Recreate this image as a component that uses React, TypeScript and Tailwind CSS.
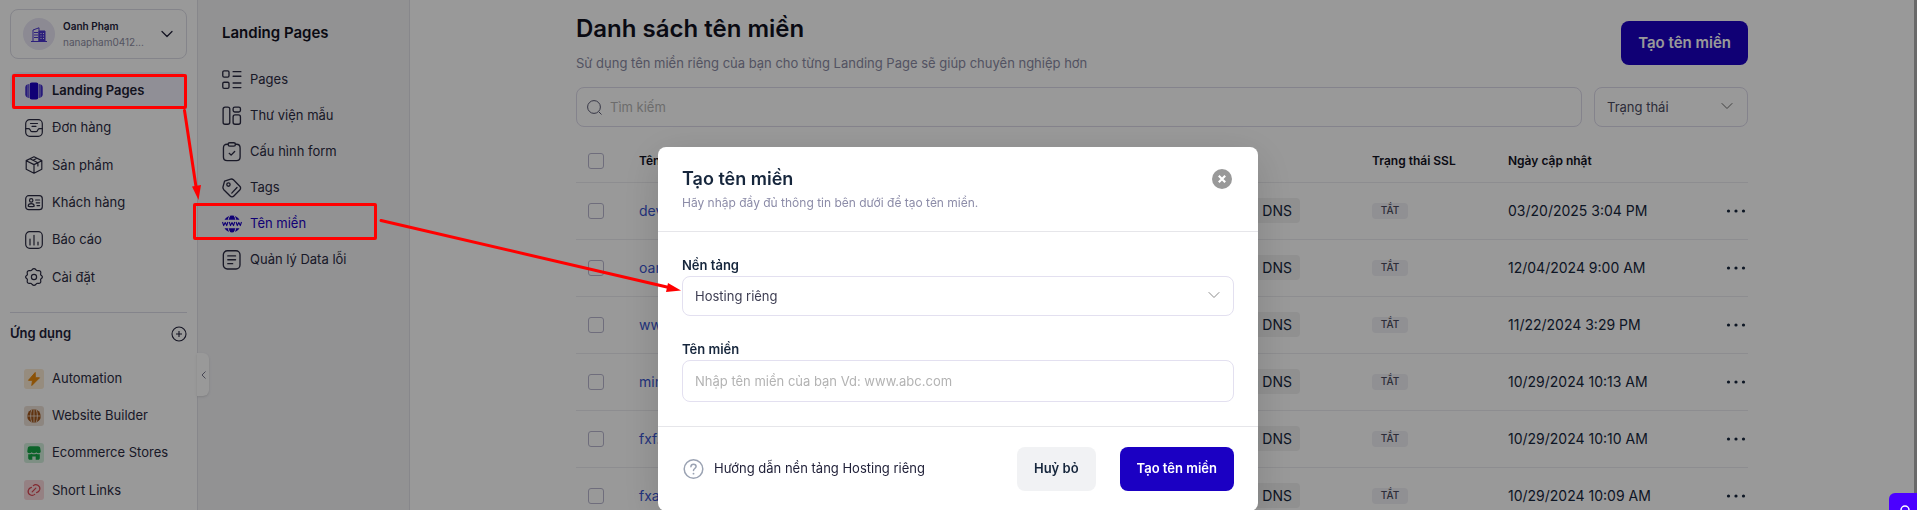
import type { ReactNode } from 'react'

type IconProps = { children: ReactNode; size?: string }

function Line({ children, size = 'size-[18px]' }: IconProps) {
  return (
    <svg viewBox="0 0 18 18" className={`${size} shrink-0`} fill="none" stroke="currentColor" strokeWidth="1.2" strokeLinecap="round" strokeLinejoin="round" aria-hidden="true">
      {children}
    </svg>
  )
}

function Chevron({ className }: { className: string }) {
  return (
    <svg viewBox="0 0 12 8" className={className} fill="none" stroke="currentColor" strokeLinecap="round" strokeLinejoin="round" aria-hidden="true">
      <path d="M1 1.5 6 6.5 11 1.5" />
    </svg>
  )
}

const mainNav = [
  {
    label: 'Landing Pages',
    active: true,
    icon: (
      <svg viewBox="0 0 18 18" className="size-[18px] shrink-0 text-[#1b00c3]" fill="currentColor" aria-hidden="true">
        <rect x="4.600" y="0.500" width="8.800" height="17" rx="2.200" />
        <path d="M3.600 2v14C1.600 15.600.4 14.600.4 12.600V5.400C.4 3.400 1.600 2.400 3.600 2Z" />
        <path d="M14.400 2v14c2-.4 3.200-1.400 3.200-3.400V5.400c0-2-1.200-3-3.200-3.400Z" />
        <path d="M2.200 2v14M15.800 2v14" stroke="#f3f1fc" strokeWidth=".6" />
      </svg>
    ),
  },
  {
    label: 'Đơn hàng',
    icon: (
      <Line>
        <rect x="0.700" y="0.700" width="16.600" height="16.600" rx="4" />
        <path d="M.7 9.700h2.600c.8 0 1.400.4 1.800 1.100l.5.900c.3.600.9.900 1.500.900h3.800c.6 0 1.200-.3 1.500-.9l.5-.9c.4-.7 1-1.100 1.800-1.100h2.600M5.500 4.500h7M7 7.300h4" />
      </Line>
    ),
  },
  {
    label: 'Sản phẩm',
    icon: (
      <Line>
        <path d="M9 .8 16.800 4.600v8.600L9 17.200 1.200 13.200V4.600L9 .8ZM1.200 4.700 9 8.600l7.800-3.900M9 8.600v8.500M5 2.800l7.900 3.900v3.200M8 4.300l3-1.600" />
      </Line>
    ),
  },
  {
    label: 'Khách hàng',
    icon: (
      <Line>
        <rect x="0.700" y="1.700" width="16.600" height="14" rx="3" />
        <circle cx="6.200" cy="6.400" r="1.700" />
        <path d="M3.200 12.200c0-1.700 1.200-2.600 3-2.600s3 .9 3 2.600c-1.500.5-4.500.5-6 0ZM10.600 6h4M11.200 8.800h3.400M12 11.600h2.600" />
      </Line>
    ),
  },
  {
    label: 'Báo cáo',
    icon: (
      <Line>
        <rect x="0.700" y="0.700" width="16.600" height="16.600" rx="4" />
        <path d="M5 8v6M9 4.300V14M13 11v3" />
      </Line>
    ),
  },
  {
    label: 'Cài đặt',
    icon: (
      <Line>
        <circle cx="9" cy="9" r="2.600" />
        <path d="M7.300 1.500c.9-1.100 2.500-1.100 3.400 0l.6.700c.3.400.8.600 1.300.5l.9-.1c1.400-.2 2.500 1 2.300 2.400l-.2 1c-.1.500.1 1 .5 1.300l.6.500c.9.700.9 1.700 0 2.400l-.6.500c-.4.300-.6.800-.5 1.300l.2 1c.2 1.400-.9 2.600-2.300 2.400l-.9-.1c-.5-.1-1 .1-1.300.5l-.6.700c-.9 1.100-2.500 1.100-3.400 0l-.6-.7c-.3-.4-.8-.6-1.300-.5l-.9.100c-1.400.2-2.500-1-2.300-2.400l.2-1c.1-.5-.1-1-.5-1.300l-.6-.5c-.9-.7-.9-1.700 0-2.400l.6-.5c.4-.3.6-.8.500-1.300l-.2-1c-.2-1.400.9-2.600 2.300-2.400l.9.100c.5.100 1-.1 1.300-.5l.6-.7Z" />
      </Line>
    ),
  },
]

const apps = [
  {
    label: 'Automation',
    tile: 'bg-[#fbe9d2] text-[#ea8a0c]',
    icon: <path d="M8.200.5 1.500 8.300h4L4.800 13.500 12.500 5.800H8.300L8.200.5Z" fill="currentColor" stroke="currentColor" strokeLinejoin="round" />,
  },
  {
    label: 'Website Builder',
    tile: 'bg-[#ece0d6] text-[#a1561c]',
    icon: (
      <>
        <circle cx="7" cy="7" r="6.800" fill="currentColor" />
        <path d="M.2 7h13.600M7 .2v13.600M4.800.8c-1.600 3.600-1.600 8.800 0 12.400M9.200.8c1.600 3.600 1.600 8.800 0 12.400" stroke="#ece0d6" strokeWidth=".8" fill="none" />
      </>
    ),
  },
  {
    label: 'Ecommerce Stores',
    tile: 'bg-[#d3eedc] text-[#14a545]',
    icon: (
      <>
        <path d="M3 .3h8c1.300 0 2 .7 2.200 1.800l.5 3.100c.1 1.200-.8 2-2.200 2-1 0-1.700-.3-2.200-1-.5.7-1.300 1-2.300 1s-1.800-.3-2.300-1c-.5.700-1.200 1-2.200 1-1.400 0-2.300-.8-2.200-2l.5-3.100C1 1 1.700.3 3 .3Z" fill="currentColor" />
        <path d="M1.200 8.200c1.200.3 2.300.100 3.300-.5 1.500.8 3.500.8 5 0 1 .6 2.100.8 3.300.5V12c0 1.200-.6 1.800-1.800 1.800H8.700V10.500H5.300v3.300H3c-1.200 0-1.800-.6-1.800-1.800V8.200Z" fill="currentColor" />
      </>
    ),
  },
  {
    label: 'Short Links',
    tile: 'bg-[#f8d7da] text-[#d9434f]',
    icon: (
      <path d="M6.300 2.600A4 4 0 0 1 12.800 6.400 4.600 4.600 0 0 1 9.600 9.700M7.700 11.400A4 4 0 0 1 1.200 7.600 4.600 4.600 0 0 1 4.400 4.300M5.200 8.800l3.600-3.600" fill="none" stroke="currentColor" strokeWidth="1.200" strokeLinecap="round" />
    ),
  },
]

const subNav = [
  {
    label: 'Pages',
    icon: (
      <Line size="size-5">
        <rect x="0.700" y="0.800" width="5.600" height="5.600" rx="1.200" />
        <rect x="0.700" y="11" width="5.600" height="5.600" rx="1.200" />
        <path d="M10 1.500h7M10 5.600h7M10 11.700h7M10 15.800h7" />
      </Line>
    ),
  },
  {
    label: 'Thư viện mẫu',
    icon: (
      <Line size="size-5">
        <rect x="1" y="1" width="6" height="15.400" rx="1.800" />
        <rect x="10" y="1" width="6.600" height="4.400" rx="1.500" />
        <rect x="10" y="8" width="6.600" height="8.400" rx="1.800" />
      </Line>
    ),
  },
  {
    label: 'Cấu hình form',
    icon: (
      <Line size="size-5">
        <path d="M5.500 2H4.600C2.400 2 1.300 3.100 1.300 5.300v8.200c0 2.200 1.100 3.300 3.300 3.300h8.400c2.200 0 3.300-1.100 3.300-3.300V5.300C16.300 3.100 15.200 2 13 2h-.9" />
        <rect x="5.500" y="0.700" width="6.600" height="3" rx="1.500" />
        <path d="m6.500 10.200 1.700 1.600 3.200-3.200" />
      </Line>
    ),
  },
  {
    label: 'Tags',
    icon: (
      <Line size="size-5">
        <path d="M2.300 2.800 7.800 1c.9-.3 1.800 0 2.500.6l5.700 5.800c1 1 1 2.400 0 3.400l-5.300 5.400c-1 1-2.400 1-3.400 0L1.600 10.500C1 9.800.7 8.900.9 8l1.400-5.200Z" />
        <circle cx="5.800" cy="5.900" r="1.500" />
        <path d="m8.800 13.600 4.700-5" />
      </Line>
    ),
  },
  {
    label: 'Tên miền',
    active: true,
    icon: (
      <svg viewBox="0 0 20 20" className="size-5 shrink-0" fill="none" stroke="currentColor" aria-hidden="true">
        <path d="M2.500 5.800A8.800 8.800 0 0 1 17.500 5.800ZM2.500 14.200a8.800 8.800 0 0 0 15 0Z" fill="currentColor" stroke="none" />
        <path d="M7.800 1.800c-.8 1.200-1.300 2.500-1.500 4M12.200 1.800c.8 1.200 1.300 2.500 1.500 4M7.800 18.200c-.8-1.200-1.300-2.500-1.500-4M12.200 18.200c.8-1.200 1.300-2.500 1.500-4" stroke="#f3f3f6" />
        <path d="m.5 8 1.200 3.600L3.200 8.600l1.500 3L5.900 8M7.300 8l1.200 3.600L10 8.600l1.500 3L12.700 8M14.100 8l1.200 3.600 1.500-3 1.500 3L19.500 8" strokeWidth="1.100" strokeLinejoin="round" />
      </svg>
    ),
  },
  {
    label: 'Quản lý Data lỗi',
    icon: (
      <Line size="size-5">
        <rect x="1.200" y="0.700" width="15" height="16.400" rx="3.600" />
        <path d="M5.200 5.300h7M5.200 8.800h7M5.200 12.300h4.400" />
      </Line>
    ),
  },
]

const domains = [
  { name: 'dev.landing.vn', date: '03/20/2025 3:04 PM' },
  { name: 'oanh.landing.vn', date: '12/04/2024 9:00 AM' },
  { name: 'www.landing.vn', date: '11/22/2024 3:29 PM' },
  { name: 'minh.landing.vn', date: '10/29/2024 10:13 AM' },
  { name: 'fxf.landing.vn', date: '10/29/2024 10:10 AM' },
  { name: 'fxa.landing.vn', date: '10/29/2024 10:09 AM' },
]

const checkbox = 'block size-4 appearance-none rounded-[3px] border border-[#b9b6cf] bg-white'

function Sidebar() {
  return (
    <aside className="w-[198px] shrink-0 border-r border-[#e2e2e8] bg-white px-[10px] pt-[9px]">
      <button className="flex h-[50px] w-full items-center rounded-lg border border-[#dddde6] px-3 text-left">
        <span className="flex size-8 shrink-0 items-center justify-center rounded-full bg-[#e9e7f5] text-[#4a35cf]">
          <svg viewBox="0 0 16 15" className="h-[15px] w-4" fill="none" stroke="currentColor" aria-hidden="true">
            <path d="M2 14V3L8 .8V14" />
            <path d="M3 5.500h4M3 8h4M3 10.500h4" />
            <path d="M8 4h6v10H8z" fill="currentColor" />
            <path d="M9.500 6.500h1M12 6.500h1M9.500 9h1M12 9h1M9.500 11.500h1M12 11.500h1" stroke="#e9e7f5" />
            <path d="M0 14.500h16" />
          </svg>
        </span>
        <span className="ml-2 flex min-w-0 flex-1 flex-col">
          <span className="text-[10px] leading-4 font-semibold text-[#22223a]">Oanh Phạm</span>
          <span className="text-[10px] leading-4 text-[#8d8da3]">nanapham0412...</span>
        </span>
        <Chevron className="mr-px h-2 w-3 stroke-[1.3] text-[#22223a]" />
      </button>

      <nav className="mt-[13px] grid h-[224px] grid-rows-6">
        {mainNav.map((item) => (
          <a
            key={item.label}
            href="#"
            className={`flex items-center gap-[9px] rounded-lg pl-[15px] text-[13px] ${item.active ? 'bg-[#f0eefb] font-semibold text-[#1d1d33]' : 'text-[#2b2b42]'}`}
          >
            {item.icon}
            {item.label}
          </a>
        ))}
      </nav>

      <div className="mt-4 flex h-[42px] items-center justify-between border-t border-[#dcdce8]">
        <h2 className="text-[13px] font-semibold text-[#22223a]">Ứng dụng</h2>
        <button aria-label="Thêm ứng dụng" className="text-[#22223a]">
          <svg viewBox="0 0 16 16" className="size-4" fill="none" stroke="currentColor" strokeWidth="1.100" aria-hidden="true">
            <circle cx="8" cy="8" r="7" />
            <path d="M8 5v6M5 8h6" />
          </svg>
        </button>
      </div>
      <nav className="mt-[6px] grid h-[149px] grid-rows-4">
        {apps.map((app) => (
          <a key={app.label} href="#" className="flex items-center gap-2 pl-[14px] text-[13px] text-[#2b2b42]">
            <span className={`flex size-5 shrink-0 items-center justify-center rounded-[3px] ${app.tile}`}>
              <svg viewBox="0 0 14 14" className="size-[14px]" aria-hidden="true">
                {app.icon}
              </svg>
            </span>
            {app.label}
          </a>
        ))}
      </nav>
    </aside>
  )
}

function SubPanel() {
  return (
    <aside className="relative w-[212px] shrink-0 border-r border-[#e2e2e8] bg-[#f3f3f6] pt-[21px] pl-6">
      <h2 className="text-[15px] leading-6 font-semibold text-[#12121f]">Landing Pages</h2>
      <nav className="mt-[17px]">
        {subNav.map((item) => (
          <a key={item.label} href="#" className={`flex h-9 items-center gap-2 text-[13px] ${item.active ? 'text-[#1b00c3]' : 'text-[#2b2b42]'}`}>
            {item.icon}
            {item.label}
          </a>
        ))}
      </nav>
      <button aria-label="Thu gọn" className="absolute top-[353px] -left-px flex h-[43px] w-3 items-center justify-center rounded-r-md bg-white text-[#77778c] shadow-sm">
        <svg viewBox="0 0 5 8" className="h-2 w-[5px]" fill="none" stroke="currentColor" aria-hidden="true">
          <path d="M4.500.5 1 4l3.500 3.500" />
        </svg>
      </button>
    </aside>
  )
}

function DomainList() {
  return (
    <main className="min-w-0 flex-1 bg-white">
      <div className="mx-auto w-full max-w-[1172px]">
        <header className="flex items-start justify-between">
          <div className="pt-[13px]">
            <h1 className="text-2xl leading-8 font-semibold text-[#12121f]">Danh sách tên miền</h1>
            <p className="mt-[6px] text-[13px] leading-6 text-[#8a8aa3]">Sử dụng tên miền riêng của bạn cho từng Landing Page sẽ giúp chuyên nghiệp hơn</p>
          </div>
          <button className="mt-[21px] h-11 rounded-lg bg-[#1b00c3] px-[17px] text-[15px] font-semibold text-white">Tạo tên miền</button>
        </header>
        <div className="mt-3 flex gap-3">
          <label className="flex h-10 flex-1 items-center gap-2 rounded-lg border border-[#dddaea] px-[10px]">
            <svg viewBox="0 0 15 15" className="size-[15px] shrink-0 text-[#5c5c75]" fill="none" stroke="currentColor" aria-hidden="true">
              <circle cx="7" cy="7" r="6.400" />
              <path d="m12 12 2.500 2.500" />
            </svg>
            <span className="sr-only">Tìm kiếm</span>
            <input placeholder="Tìm kiếm" className="w-full bg-transparent pt-px text-[13px] outline-none placeholder:text-[#b5b5b5]" />
          </label>
          <div className="relative w-[154px]">
            <select aria-label="Trạng thái" className="h-10 w-full appearance-none rounded-lg border border-[#dddaea] bg-transparent px-3 pt-0.5 text-[13px] text-[#4b4b60]">
              <option>Trạng thái</option>
            </select>
            <Chevron className="pointer-events-none absolute top-[15px] right-[15px] h-2 w-3 text-[#6b6b6b]" />
          </div>
        </div>
        <table className="mt-[13px] w-full table-fixed text-left">
          <thead>
            <tr className="h-[42px] border-b border-[#ececf0] text-xs text-[#12121f]">
              <th className="w-[63px] pl-3"><input type="checkbox" aria-label="Chọn tất cả" className={checkbox} /></th>
              <th className="font-semibold">Tên miền</th>
              <th className="w-[240px] font-semibold">Cấu hình</th>
              <th className="w-[136px] font-semibold">Trạng thái SSL</th>
              <th className="w-[200px] font-semibold">Ngày cập nhật</th>
              <th className="w-10"><span className="sr-only">Thao tác</span></th>
            </tr>
          </thead>
          <tbody>
            {domains.map((domain) => (
              <tr key={domain.name} className="h-[57px] border-b border-[#ececf0] text-sm text-[#16263c]">
                <td className="pl-3"><input type="checkbox" aria-label={domain.name} className={checkbox} /></td>
                <td><a href="#" className="text-[#3a55d0]">{domain.name}</a></td>
                <td>
                  <div className="mr-[72px] flex justify-end">
                    <button className="h-[25px] rounded bg-[#f1f1f1] px-2 whitespace-nowrap">Cấu hình DNS</button>
                  </div>
                </td>
                <td><span className="flex h-4 w-9 items-center justify-center rounded bg-[#f1f1f5] text-[10px] font-medium text-[#4b4b60]">TẮT</span></td>
                <td>{domain.date}</td>
                <td>
                  <button aria-label="Thao tác" className="ml-auto mr-[2px] block">
                    <svg viewBox="0 0 20 4" className="h-1 w-5" fill="currentColor" aria-hidden="true">
                      <circle cx="2.500" cy="2" r="1.600" />
                      <circle cx="10" cy="2" r="1.600" />
                      <circle cx="17.500" cy="2" r="1.600" />
                    </svg>
                  </button>
                </td>
              </tr>
            ))}
          </tbody>
        </table>
      </div>
    </main>
  )
}

function CreateDomainDialog() {
  return (
    <div className="fixed inset-0 flex items-start justify-center bg-black/40 pt-[147px] pr-px">
      <section role="dialog" aria-labelledby="dialog-title" className="w-[600px] rounded-lg bg-white text-[#16263c] shadow-[0_10px_40px_rgba(0,0,0,0.15)]">
        <header className="flex items-start justify-between border-b border-[#e6e6ea] px-6 py-[18px]">
          <div>
            <h2 id="dialog-title" className="text-lg leading-7 font-semibold">Tạo tên miền</h2>
            <p className="text-xs leading-5 text-[#8c8ca8]">Hãy nhập đầy đủ thông tin bên dưới để tạo tên miền.</p>
          </div>
          <button aria-label="Đóng" className="mt-0.5">
            <svg viewBox="0 0 24 24" className="size-6" aria-hidden="true">
              <circle cx="12" cy="12" r="10" fill="#999" />
              <path d="m8.800 8.800 6.400 6.400m0-6.400-6.400 6.400" stroke="#fff" strokeWidth="2.200" />
            </svg>
          </button>
        </header>
        <div className="px-6 pt-[22px] pb-6 text-[13px]">
          <label htmlFor="platform" className="block leading-[22px] font-semibold">Nền tảng</label>
          <div className="relative">
            <select id="platform" className="block h-10 w-full appearance-none rounded-lg border border-[#e3e0f0] bg-white px-3 pt-0.5 text-[#3d3d52]">
              <option>Hosting riêng</option>
            </select>
            <Chevron className="pointer-events-none absolute top-[15px] right-[14px] h-2 w-3 text-[#8a8a8a]" />
          </div>
          <label htmlFor="domain" className="mt-[22px] block leading-[22px] font-semibold">Tên miền</label>
          <input id="domain" placeholder="Nhập tên miền của bạn Vd: www.abc.com" className="block h-[42px] w-full rounded-lg border border-[#e3e0f0] px-3 outline-none placeholder:text-[#b3b3b3]" />
        </div>
        <footer className="flex items-center border-t border-[#e6e6ea] px-6 py-5 text-[13px]">
          <a href="#" className="flex flex-1 items-center gap-[10px] text-[#22223a]">
            <svg viewBox="0 0 22 22" className="size-[22px]" fill="none" stroke="#9ba3b3" strokeWidth="1.500" strokeLinecap="round" aria-hidden="true">
              <circle cx="11.500" cy="11" r="9.300" />
              <path d="M8.900 8.700c.1-1.500 1.200-2.400 2.600-2.400s2.600.9 2.600 2.300c0 1.800-2.600 2-2.600 3.800" />
              <path d="M11.500 15.600v.1" strokeWidth="1.800" />
            </svg>
            Hướng dẫn nền tảng Hosting riêng
          </a>
          <button className="h-11 rounded-lg bg-[#f1f2f4] px-[17px] font-semibold">Huỷ bỏ</button>
          <button className="ml-6 h-11 rounded-lg bg-[#1b00c3] px-[17px] font-semibold text-white">Tạo tên miền</button>
        </footer>
      </section>
    </div>
  )
}

function Annotations() {
  return (
    <div className="pointer-events-none fixed inset-0">
      <div className="absolute top-[74px] left-3 h-[35px] w-[175px] rounded-xs border-3 border-[#ff0000]" />
      <div className="absolute top-[203px] left-[193px] h-[37px] w-[184px] rounded-xs border-3 border-[#ff0000]" />
      <svg className="absolute top-0 left-0 h-[300px] w-[700px]" viewBox="0 0 700 300" fill="#ff0000" stroke="#ff0000" strokeLinecap="round" aria-hidden="true">
        <path d="M184.500 110.500 196.500 190M381 220.500 669 287.500" strokeWidth="3" fill="none" />
        <path d="m198.500 200-6.500-13.500 9-1.500ZM681 290.500l-15 1.500 2-9Z" stroke="none" />
      </svg>
    </div>
  )
}

export default function App() {
  return (
    <div className="relative flex h-screen overflow-hidden bg-white font-[Inter,'Noto_Sans',sans-serif]">
      <Sidebar />
      <SubPanel />
      <DomainList />
      <div className="w-[3px] shrink-0 bg-[#b0b0b0]" />
      <CreateDomainDialog />
      <button aria-label="Hỗ trợ" className="fixed -right-3 -bottom-[23px] flex size-10 justify-center rounded-md bg-[#4b00ff] pt-3 text-white">
        <svg viewBox="0 0 16 16" className="-ml-2 size-4" fill="none" stroke="currentColor" strokeWidth="1.500" aria-hidden="true">
          <circle cx="8" cy="5" r="4" />
          <path d="M1 16c0-4 3-6 7-6s7 2 7 6" />
        </svg>
      </button>
      <Annotations />
    </div>
  )
}
